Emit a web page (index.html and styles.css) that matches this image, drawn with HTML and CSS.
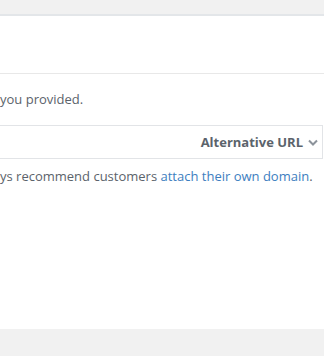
FILE: index.html
```html
<!DOCTYPE html>
<html>
<head>
<meta charset="utf-8">
<link rel="stylesheet" href="styles.css">
</head>
<body>
<div class="topbar"></div>
<div class="card">
  <div class="card-header"></div>
  <div class="card-body">
    <p class="note">you provided.</p>
    <div class="select">
      <span class="select-label">Alternative URL</span>
      <svg class="chevron" width="10" height="7" viewBox="0 0 10 7"><path d="M1 1.5 L5 5.5 L9 1.5" fill="none" stroke="#8c939b" stroke-width="2"/></svg>
    </div>
    <p class="note note-2">ys recommend customers <a href="#" class="link">attach their own domain</a>.</p>
  </div>
</div>
<div class="bottombar"></div>
</body>
</html>
```

FILE: styles.css
```css
html, body {
  margin: 0;
  padding: 0;
  background: #f1f1f1;
  font-family: "Open Sans", "Noto Sans", sans-serif;
  font-size: 13px;
  color: #5b636b;
}
.topbar {
  height: 14px;
  background: #f1f1f1;
}
.card {
  background: #fff;
  border-top: 2px solid #e3e6e9;
  height: 313px;
  display: flex;
  flex-direction: column;
}
.card-header {
  height: 57px;
  border-bottom: 1px solid #e8e8e8;
}
.card-body {
  padding: 15px 1px 0 0;
}
.note {
  margin: 0;
  line-height: 20px;
}
.note-2 {
  margin-top: 7px;
}
.select {
  margin-top: 16px;
  height: 32px;
  border: 1px solid #e2e4e7;
  border-left: none;
  display: flex;
  align-items: center;
  justify-content: flex-end;
  gap: 5px;
  padding-right: 4px;
}
.select-label {
  font-weight: 700;
  color: #5b636b;
}
.chevron {
  display: block;
  margin-top: 1px;
}
.link {
  color: #3d7ec0;
  text-decoration: none;
}
.bottombar {
  height: 27px;
  background: #f1f1f1;
}
```
